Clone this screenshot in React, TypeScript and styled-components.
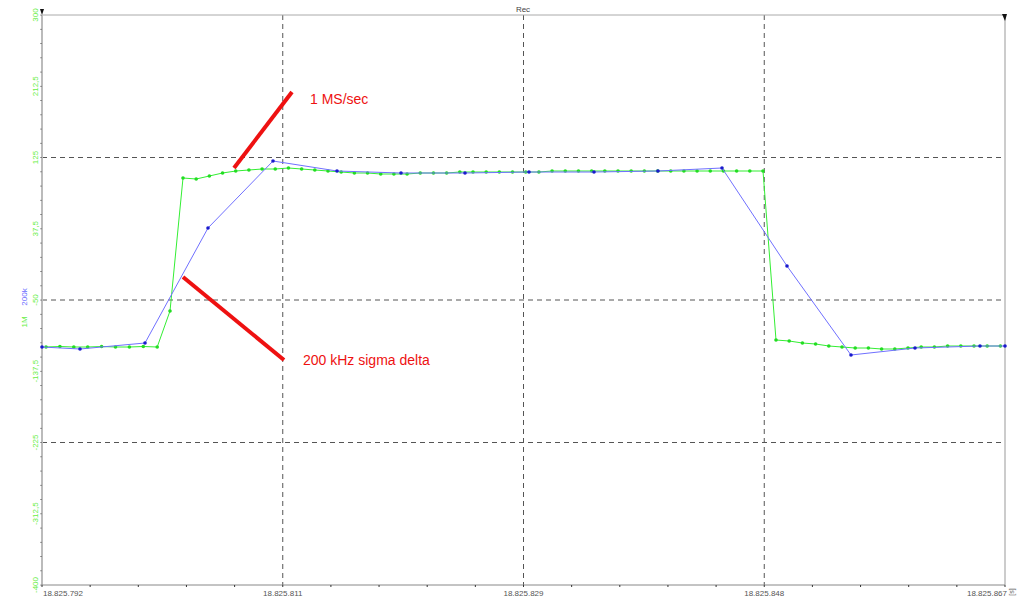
import React from "react";
import styled, { createGlobalStyle } from "styled-components";

const Global = createGlobalStyle`
  html, body { margin: 0; padding: 0; background: #fff; }
  body { font-family: "Liberation Sans", Arial, sans-serif; }
`;

const Frame = styled.div`
  width: 1024px;
  height: 599px;
  background: #ffffff;
  overflow: hidden;
  display: flex;
`;

const Chart = styled.svg`
  display: block;
  width: 1024px;
  height: 599px;
`;

const L = 42, R = 1005, T = 15, B = 585;

const green: [number, number][] = (() => {
  const p: [number, number][] = [];
  for (let i = 0; i < 9; i++) p.push([46 + i * 13.9, 347 - (i % 3 === 1 ? 0.5 : 0)]);
  p.push([170, 311]);
  const plat = [178, 179, 176, 173, 171, 170, 169, 169, 168, 169, 170, 171, 172, 173, 173, 174, 174, 174, 173, 173, 173, 172, 172, 172, 172, 172, 172, 172, 171, 171, 171, 171, 171, 171, 171, 171, 171, 171, 171, 171, 171, 171, 171, 171, 171];
  const step = (763 - 183) / (plat.length - 1);
  plat.forEach((y, i) => p.push([183 + i * step, y]));
  const tail = [340, 341, 343, 344, 346, 347, 348, 348, 349, 349, 348, 347, 347, 346, 346, 346, 346, 346];
  tail.forEach((y, i) => p.push([776 + i * 13.2, y]));
  return p;
})();

const blue: [number, number][] = [
  [42, 347], [80, 349], [145, 343], [208, 228], [273, 161], [337, 171], [401, 173],
  [465, 173], [529, 172], [594, 172], [658, 171], [722, 168], [787, 266], [851, 355],
  [915, 348], [980, 346], [1005, 346],
];

const yLabels = ["300", "212,5", "125", "37,5", "-50", "-137,5", "-225", "-312,5", "-400"];
const xLabels = ["18.825.792", "18.825.811", "18.825.829", "18.825.848", "18.825.867"];

export default function App() {
  const pts = (a: [number, number][]) => a.map(([x, y]) => `${x},${y}`).join(" ");
  const ySteps = (B - T) / 8;
  const xSteps = (R - L) / 4;
  return (
    <Frame>
      <Global />
      <Chart viewBox="0 0 1024 599" fontFamily="Liberation Sans, Arial, sans-serif">
        <text x={523} y={12} fontSize={8} fill="#444" textAnchor="middle">Rec</text>
        {[1, 2, 3].map((i) => (
          <line key={"h" + i} x1={L} x2={R} y1={T + i * 2 * ySteps} y2={T + i * 2 * ySteps} stroke="#555" strokeDasharray="5 4" strokeWidth={1} />
        ))}
        {[1, 2, 3].map((i) => (
          <line key={"v" + i} y1={T} y2={B} x1={L + i * xSteps} x2={L + i * xSteps} stroke="#555" strokeDasharray="5 4" strokeWidth={1} />
        ))}
        <line x1={L} x2={R} y1={T} y2={T} stroke="#aaa" />
        <line x1={R} x2={R} y1={T} y2={B} stroke="#999" />
        <line x1={L} x2={L} y1={T} y2={B} stroke="#bbb" strokeWidth={2} />
        <line x1={L} x2={R} y1={B} y2={B} stroke="#888" />
        <polygon points="40,9 44,9 42,15" fill="#111" />
        <polygon points="1002,14 1007,14 1005,21" fill="#111" />
        {Array.from({ length: 41 }).map((_, i) => (
          <circle key={"yt" + i} cx={L - 1} cy={T + i * (ySteps / 5)} r={0.6} fill="#333" />
        ))}
        {Array.from({ length: 21 }).map((_, i) => (
          <line key={"xt" + i} x1={L + i * (xSteps / 5)} x2={L + i * (xSteps / 5)} y1={B} y2={B + 2} stroke="#333" />
        ))}
        {yLabels.map((t, i) => {
          const y = T + i * ySteps;
          return (
            <text key={t} x={0} y={0} fontSize={8} fill="#66ee44" textAnchor="middle"
              transform={`translate(38 ${y}) rotate(-90)`}>{t}</text>
          );
        })}
        <text fontSize={8} fill="#6a6aff" textAnchor="middle" transform="translate(27 297) rotate(-90)">200k</text>
        <text fontSize={8} fill="#66ee44" textAnchor="middle" transform="translate(27 322) rotate(-90)">1M</text>
        {xLabels.map((t, i) => (
          <text key={t} x={L + i * xSteps + (i === 0 ? 21 : i === 4 ? -18 : 0)} y={596} fontSize={8} fill="#555" textAnchor="middle">{t}</text>
        ))}
        <text fontSize={7} fill="#666" textAnchor="middle" transform="translate(1014 592) rotate(-90)">[s]</text>
        <polyline points={pts(green)} fill="none" stroke="#33ee33" strokeWidth={1} />
        {green.map(([x, y], i) => <circle key={"g" + i} cx={x} cy={y} r={1.8} fill="#22dd22" />)}
        <polyline points={pts(blue)} fill="none" stroke="#7070ff" strokeWidth={1} />
        {blue.map(([x, y], i) => <circle key={"b" + i} cx={x} cy={y} r={1.8} fill="#1a1acc" />)}
        <line x1={292} y1={92} x2={234} y2={168} stroke="#ee1111" strokeWidth={4} />
        <line x1={183} y1={277} x2={284} y2={360} stroke="#ee1111" strokeWidth={4} />
        <text x={310} y={104} fontSize={14} fill="#ee1111">1 MS/sec</text>
        <text x={303} y={365} fontSize={14} fill="#ee1111">200 kHz sigma delta</text>
      </Chart>
    </Frame>
  );
}
